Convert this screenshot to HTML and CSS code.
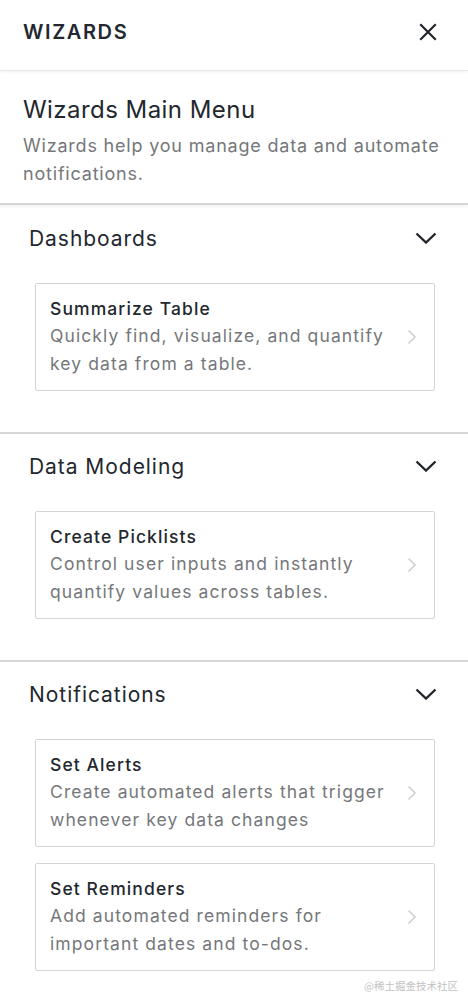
FILE: index.html
```html
<!DOCTYPE html>
<html lang="en">
<head>
<meta charset="utf-8">
<title>Wizards</title>
<link rel="stylesheet" href="styles.css">
</head>
<body>
<div class="panel">
  <header class="topbar">
    <h1 class="topbar-title">WIZARDS</h1>
    <svg class="close" width="18" height="18" viewBox="0 0 18 18"><path d="M2 2 L16 16 M16 2 L2 16" stroke="#22262c" stroke-width="2.2" fill="none" stroke-linecap="square"/></svg>
  </header>
  <div class="intro">
    <h2 class="intro-title">Wizards Main Menu</h2>
    <p class="intro-text">Wizards help you manage data and automate notifications.</p>
  </div>

  <section class="group group-first">
    <div class="group-head">
      <span class="group-title">Dashboards</span>
      <svg class="chev-down" width="22" height="12" viewBox="0 0 22 12"><path d="M1.5 1.5 L11 10.5 L20.5 1.5" stroke="#22262c" stroke-width="2.4" fill="none"/></svg>
    </div>
    <div class="cards">
      <a class="card">
        <div class="card-body">
          <div class="card-title">Summarize Table</div>
          <div class="card-text">Quickly find, visualize, and quantify key data from a table.</div>
        </div>
        <svg class="chev-right" width="10" height="16" viewBox="0 0 10 16"><path d="M1.5 1.5 L8 8 L1.5 14.5" stroke="#cfcfcf" stroke-width="1.6" fill="none"/></svg>
      </a>
    </div>
  </section>

  <section class="group">
    <div class="group-head">
      <span class="group-title">Data Modeling</span>
      <svg class="chev-down" width="22" height="12" viewBox="0 0 22 12"><path d="M1.5 1.5 L11 10.5 L20.5 1.5" stroke="#22262c" stroke-width="2.4" fill="none"/></svg>
    </div>
    <div class="cards">
      <a class="card">
        <div class="card-body">
          <div class="card-title">Create Picklists</div>
          <div class="card-text">Control user inputs and instantly quantify values across tables.</div>
        </div>
        <svg class="chev-right" width="10" height="16" viewBox="0 0 10 16"><path d="M1.5 1.5 L8 8 L1.5 14.5" stroke="#cfcfcf" stroke-width="1.6" fill="none"/></svg>
      </a>
    </div>
  </section>

  <section class="group">
    <div class="group-head">
      <span class="group-title">Notifications</span>
      <svg class="chev-down" width="22" height="12" viewBox="0 0 22 12"><path d="M1.5 1.5 L11 10.5 L20.5 1.5" stroke="#22262c" stroke-width="2.4" fill="none"/></svg>
    </div>
    <div class="cards">
      <a class="card">
        <div class="card-body">
          <div class="card-title">Set Alerts</div>
          <div class="card-text">Create automated alerts that trigger whenever key data changes</div>
        </div>
        <svg class="chev-right" width="10" height="16" viewBox="0 0 10 16"><path d="M1.5 1.5 L8 8 L1.5 14.5" stroke="#cfcfcf" stroke-width="1.6" fill="none"/></svg>
      </a>
      <a class="card">
        <div class="card-body">
          <div class="card-title">Set Reminders</div>
          <div class="card-text">Add automated reminders for important dates and to-dos.</div>
        </div>
        <svg class="chev-right" width="10" height="16" viewBox="0 0 10 16"><path d="M1.5 1.5 L8 8 L1.5 14.5" stroke="#cfcfcf" stroke-width="1.6" fill="none"/></svg>
      </a>
    </div>
  </section>
  <div class="watermark">@稀土掘金技术社区</div>
</div>
</body>
</html>
```

FILE: styles.css
```css
* { box-sizing: border-box; }
html, body { margin: 0; padding: 0; background: #fff; }
body {
  font-family: Inter, "Noto Sans", sans-serif;
  color: #23272e;
  width: 468px;
  height: 1006px;
  overflow: hidden;
}
.panel { position: relative; height: 1006px; }

.topbar {
  height: 71px;
  display: flex;
  align-items: center;
  justify-content: space-between;
  padding: 0 31px 6px 23px;
  border-bottom: 1px solid #e6e6e6;
  box-shadow: 0 1px 3px rgba(0,0,0,0.06);
  position: relative;
}
.topbar-title {
  margin: 0;
  font-size: 20px;
  font-weight: 600;
  letter-spacing: 1.6px;
}
.close { display: block; }

.intro {
  padding: 24px 23px 15px;
  border-bottom: 2px solid #d6d6d6;
  box-shadow: 0 2px 3px rgba(0,0,0,0.05);
}
.intro-title {
  margin: 0 0 7px;
  font-size: 24px;
  font-weight: 400;
  line-height: 30px;
  letter-spacing: 0.45px;
}
.intro-text {
  margin: 0;
  font-size: 18px;
  line-height: 28px;
  color: #75777b;
  letter-spacing: 0.8px;
}

.group { border-top: 2px solid #d6d6d6; padding-bottom: 41px; }
.group-first { border-top: none; padding-top: 1px; }
.group-head {
  height: 64px;
  display: flex;
  align-items: center;
  justify-content: space-between;
  padding: 0 31px 0 29px;
}
.group-title { font-size: 21px; font-weight: 400; letter-spacing: 0.95px; }
.chev-down { display: block; }

.cards {
  margin: 13px 33px 0 35px;
  display: flex;
  flex-direction: column;
  gap: 16px;
}
.card {
  display: flex;
  align-items: center;
  gap: 12px;
  border: 1px solid #d5d5d5;
  border-radius: 2px;
  padding: 12px 17px 12px 14px;
  height: 108px;
}
.card-body { flex: 1; }
.card-title {
  font-size: 17.5px;
  font-weight: 500;
  line-height: 26px;
  letter-spacing: 1.1px;
}
.card-text {
  font-size: 17.5px;
  line-height: 28px;
  color: #75777b;
  letter-spacing: 1.1px;
}
.chev-right { display: block; flex: none; }

.watermark {
  position: absolute;
  left: 364px;
  top: 978px;
  font-size: 10.5px;
  white-space: nowrap;
  color: #c2c2c2;
  font-family: "Noto Sans CJK SC", sans-serif;
}
```
